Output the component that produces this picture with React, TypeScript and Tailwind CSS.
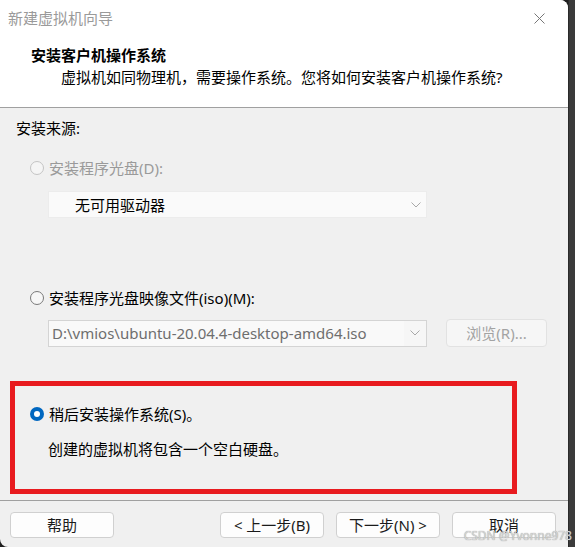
import React from "react";

const font = "font-['Noto_Sans','Noto_Sans_CJK_SC',sans-serif]";

function Radio({ state }: { state: "off" | "disabled" | "on" }) {
  if (state === "on") {
    return (
      <span className="flex h-[14px] w-[14px] items-center justify-center rounded-full bg-[#0067c0]">
        <span className="h-[6px] w-[6px] rounded-full bg-white" />
      </span>
    );
  }
  return (
    <span
      className={
        state === "disabled"
          ? "h-[14px] w-[14px] rounded-full border border-[#c4c4c4] bg-[#f5f5f5]"
          : "h-[14px] w-[14px] rounded-full border border-[#7a7a7a] bg-[#f7f7f7]"
      }
    />
  );
}

function Chevron() {
  return (
    <svg width="10" height="6" viewBox="0 0 10 6" fill="none">
      <path d="M0.5 0.5 L5 5 L9.5 0.5" stroke="#a8a8a8" strokeWidth="1" />
    </svg>
  );
}

function Btn({ label, className = "" }: { label: string; className?: string }) {
  return (
    <div
      className={`flex h-[26px] w-[104px] items-center justify-center rounded-[4px] border border-[#d0d0d0] bg-[#fdfdfd] text-[15px] text-[#1a1a1a] ${className}`}
    >
      {label}
    </div>
  );
}

export default function App() {
  return (
    <div className={`relative flex h-[547px] w-[575px] bg-[#1f1f1f] ${font}`}>
      <div className="flex h-full w-[568px] flex-col overflow-hidden rounded-tr-[8px] rounded-bl-[8px] bg-[#f0f0f0]">
        {/* title bar */}
        <div className="flex h-[36px] items-center justify-between bg-white pl-[8px] pr-[23px]">
          <span className="text-[15px] text-[#9a9a9a]">新建虚拟机向导</span>
          <svg width="11" height="11" viewBox="0 0 11 11">
            <path d="M0.5 0.5 L10.5 10.5 M10.5 0.5 L0.5 10.5" stroke="#777" strokeWidth="1" />
          </svg>
        </div>

        {/* header */}
        <div className="flex h-[72px] flex-col border-b border-[#a0a0a0] bg-white pl-[31px]">
          <div className="mt-[8px] h-[22px] text-[15px] font-bold leading-[22px] text-black">安装客户机操作系统</div>
          <div className="ml-[30px] h-[22px] text-[15px] leading-[22px] text-black">
            虚拟机如同物理机，需要操作系统。您将如何安装客户机操作系统?
          </div>
        </div>

        {/* body */}
        <div className="flex flex-1 flex-col pl-[16px] text-[15px] leading-[22px] text-black">
          <div className="mt-[9px] h-[22px]">安装来源:</div>

          <div className="mt-[18px] flex h-[22px] items-center gap-[5px] pl-[14px] text-[#9a9a9a]">
            <Radio state="disabled" />
            <span>安装程序光盘(D):</span>
          </div>
          <div className="ml-[32px] mt-[12px] flex h-[27px] w-[379px] items-center justify-between border border-[#ececec] bg-[#fafafa] pl-[26px] pr-[5px]">
            <span>无可用驱动器</span>
            <Chevron />
          </div>

          <div className="mt-[69px] flex h-[22px] items-center gap-[5px] pl-[14px]">
            <Radio state="off" />
            <span>安装程序光盘映像文件(iso)(M):</span>
          </div>
          <div className="ml-[32px] mt-[10px] flex h-[28px] items-center">
            <div className="flex h-[27px] w-[379px] items-center border border-[#d4d4d4] bg-[#f6f6f6]">
              <div className="flex h-full w-[355px] items-center bg-[#f9f9f9] pl-[3px] text-[#6e6e6e]">
                D:\vmios\ubuntu-20.04.4-desktop-amd64.iso
              </div>
              <div className="flex flex-1 items-center justify-center">
                <Chevron />
              </div>
            </div>
            <div className="ml-[19px] flex h-[28px] w-[101px] items-center justify-center rounded-[4px] border border-[#e2e2e2] bg-[#f6f6f6] text-[#a3a3a3]">
              浏览(R)...
            </div>
          </div>

          <div className="-ml-[6px] mt-[34px] flex h-[113px] w-[507px] flex-col border-[5px] border-[#e81b1f] pl-[15px]">
            <div className="mt-[17px] flex h-[22px] items-center gap-[5px]">
              <Radio state="on" />
              <span>稍后安装操作系统(S)。</span>
            </div>
            <div className="ml-[18px] mt-[13px] h-[22px]">创建的虚拟机将包含一个空白硬盘。</div>
          </div>
        </div>

        {/* footer */}
        <div className="flex h-[47px] items-start gap-[12px] border-t border-[#a0a0a0] pl-[10px] pt-[11px]">
          <Btn label="帮助" className="mr-[94px]" />
          <Btn label="< 上一步(B)" />
          <Btn label="下一步(N) >" />
          <Btn label="取消" />
        </div>
      </div>
      <div className="flex-1 border-l border-[#2a2a2a] bg-[#3b3b3b]" />

      <span className="absolute bottom-[3px] right-[3px] text-[12px] leading-[16px] text-[#d6d6d6] [text-shadow:0_0_1px_#888]">
        CSDN @Yvonne978
      </span>
    </div>
  );
}
